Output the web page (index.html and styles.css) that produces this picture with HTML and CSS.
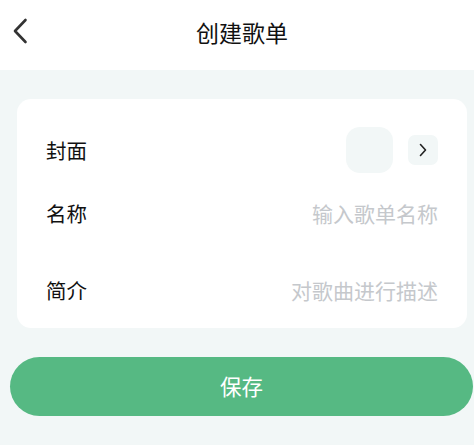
FILE: index.html
```html
<!DOCTYPE html>
<html lang="zh-CN">
<head>
<meta charset="utf-8">
<title>创建歌单</title>
<link rel="stylesheet" href="styles.css">
</head>
<body>
<div class="page">
  <header class="topbar">
    <button class="back" aria-label="返回">
      <svg width="18" height="28" viewBox="0 0 18 28"><path d="M14.5 3 L4 14 L14.5 25" fill="none" stroke="#333" stroke-width="2.6" stroke-linecap="round" stroke-linejoin="round"/></svg>
    </button>
    <h1 class="title">创建歌单</h1>
  </header>
  <main class="content">
    <section class="card">
      <div class="row row-cover">
        <span class="label">封面</span>
        <div class="cover-pick">
          <div class="thumb"></div>
          <div class="go">
            <svg width="10" height="14" viewBox="0 0 10 14"><path d="M2.5 1.5 L7.5 7 L2.5 12.5" fill="none" stroke="#222" stroke-width="1.6" stroke-linecap="round" stroke-linejoin="round"/></svg>
          </div>
        </div>
      </div>
      <div class="row row-name">
        <span class="label">名称</span>
        <span class="placeholder">输入歌单名称</span>
      </div>
      <div class="row row-desc">
        <span class="label">简介</span>
        <span class="placeholder">对歌曲进行描述</span>
      </div>
    </section>
    <button class="save">保存</button>
  </main>
</div>
</body>
</html>
```
FILE: styles.css
```css
* { box-sizing: border-box; }

html, body {
  margin: 0;
  padding: 0;
  background: #f2f7f7;
  font-family: "Noto Sans CJK SC", "Noto Sans", sans-serif;
}

.page {
  width: 474px;
  height: 445px;
  overflow: hidden;
}

.topbar {
  height: 70px;
  background: #ffffff;
  display: flex;
  align-items: center;
  justify-content: center;
  position: relative;
}

.back {
  position: absolute;
  left: 11px;
  top: 17px;
  padding: 0;
  border: 0;
  background: none;
  display: flex;
}

.title {
  margin: 0 0 6px 10px;
  font-size: 23px;
  font-weight: 400;
  color: #111;
  line-height: 1;
}

.content {
  padding: 29px 0 0 0;
}

.card {
  margin: 0 7px 0 17px;
  background: #ffffff;
  border-radius: 14px;
  height: 229px;
  padding: 28px 29px 0 29px;
  display: flex;
  flex-direction: column;
}

.row {
  display: flex;
  align-items: center;
  justify-content: space-between;
}

.row-cover { height: 46px; }
.row-name { height: 36px; margin-top: 22px; }
.row-desc { height: 36px; margin-top: 41px; }

.label {
  font-size: 20.5px;
  color: #111;
  line-height: 1;
}

.placeholder {
  font-size: 21px;
  color: #c5c8cc;
  line-height: 1;
}

.cover-pick {
  display: flex;
  align-items: center;
  gap: 15px;
}

.thumb {
  width: 47px;
  height: 46px;
  border-radius: 14px;
  background: #f2f7f7;
}

.go {
  width: 30px;
  height: 30px;
  border-radius: 7px;
  background: #f2f7f7;
  display: flex;
  align-items: center;
  justify-content: center;
}

.save {
  display: block;
  margin: 29px 1px 0 10px;
  width: 463px;
  height: 59px;
  border: 0;
  border-radius: 30px;
  background: #56b983;
  color: #ffffff;
  font-family: "Noto Sans CJK SC", "Noto Sans", sans-serif;
  font-size: 21.5px;
  line-height: 1;
  padding: 0 0 2px 0;
}
```
